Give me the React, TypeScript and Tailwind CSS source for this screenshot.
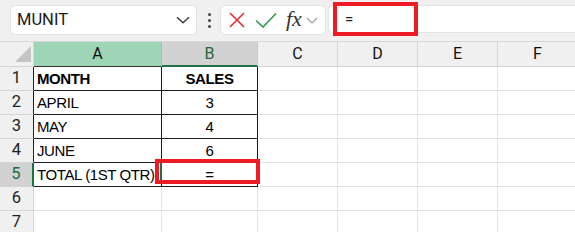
import React from "react";

const cols = ["A", "B", "C", "D", "E", "F"];

type Row = { n: number; a: string; b: string; bold?: boolean; table: boolean };

const rows: Row[] = [
  { n: 1, a: "MONTH", b: "SALES", bold: true, table: true },
  { n: 2, a: "APRIL", b: "3", table: true },
  { n: 3, a: "MAY", b: "4", table: true },
  { n: 4, a: "JUNE", b: "6", table: true },
  { n: 5, a: "TOTAL (1ST QTR)", b: "=", table: true },
  { n: 6, a: "", b: "", table: false },
  { n: 7, a: "", b: "", table: false },
];

function Toolbar() {
  return (
    <div className="relative flex h-[42px] items-start bg-[#f0f0f0] border-b border-[#d9d9d9] font-['Roboto',sans-serif]">
      {/* Name box */}
      <div className="ml-[10px] mt-[5px] flex h-[30px] w-[187px] items-center justify-between rounded-[5px] border border-[#e3e3e3] bg-white pl-[6px] pr-[6px]">
        <span className="text-[16.5px] leading-none text-[#1a1a1a]">MUNIT</span>
        <svg width="14" height="8" viewBox="0 0 14 8">
          <path d="M1 1.2 L7 6.8 L13 1.2" fill="none" stroke="#3a3a3a" strokeWidth="1.4" />
        </svg>
      </div>
      {/* Dots */}
      <div className="mt-[13px] ml-[10px] flex w-[4px] flex-col items-center gap-[3px]">
        <div className="h-[3px] w-[3px] rounded-full bg-[#444]" />
        <div className="h-[3px] w-[3px] rounded-full bg-[#444]" />
        <div className="h-[3px] w-[3px] rounded-full bg-[#444]" />
      </div>
      {/* Buttons */}
      <div className="ml-[9px] mt-[5px] flex h-[30px] w-[106px] items-center rounded-[5px] border border-[#e3e3e3] bg-white pl-[8px]">
        <svg width="16" height="16" viewBox="0 0 16 16">
          <path d="M1 1 L15 15 M15 1 L1 15" stroke="#e3262c" strokeWidth="1.5" fill="none" />
        </svg>
        <svg width="22" height="16" viewBox="0 0 22 16" className="ml-[10px]">
          <path d="M1 8.5 L8 15 L21 1.5" stroke="#2f9a45" strokeWidth="1.6" fill="none" />
        </svg>
        <span className="ml-[9px] -mt-[3px] font-['Liberation_Serif',serif] text-[22px] italic leading-none text-[#333]">
          fx
        </span>
        <svg width="12" height="7" viewBox="0 0 12 7" className="ml-[4px]">
          <path d="M1 1 L6 6 L11 1" fill="none" stroke="#9a9a9a" strokeWidth="1.2" />
        </svg>
      </div>
      {/* Formula input */}
      <div className="ml-[2px] mt-[5px] flex h-[28px] flex-1 items-center rounded-l-[5px] border border-r-0 border-[#e3e3e3] bg-white pl-[16px]">
        <span className="text-[15px] leading-none text-[#222]">=</span>
      </div>
      {/* Red annotation */}
      <div className="absolute left-[333px] top-[2px] h-[34px] w-[85px] border-[4px] border-[#ed1c24]" />
    </div>
  );
}

function HeaderRow() {
  return (
    <div className="flex h-[25px] font-['Roboto',sans-serif] text-[16px]">
      <div className="relative w-[34px] shrink-0 border-r border-b border-[#d4d4d4] bg-[#f0f0f0]">
        <svg width="16" height="16" viewBox="0 0 16 16" className="absolute left-[15px] top-[4px]">
          <path d="M16 0 L16 16 L0 16 Z" fill="#c4c4c4" />
        </svg>
      </div>
      <div className="flex w-[128px] shrink-0 items-center justify-center border-r border-b border-r-[#b5b5b5] border-b-[#333] bg-[#9fd5b7] text-[#111]">
        A
      </div>
      <div className="flex w-[96px] shrink-0 items-center justify-center border-r border-r-[#c8c8c8] border-b-2 border-b-[#1e7145] bg-[#d2d2d2] text-[#1e6b41]">
        B
      </div>
      {cols.slice(2).map((c) => (
        <div
          key={c}
          className="flex w-[80px] shrink-0 items-center justify-center border-r border-b border-[#d4d4d4] bg-[#f0f0f0] text-[#111]"
        >
          {c}
        </div>
      ))}
    </div>
  );
}

function DataRow({ r }: { r: Row }) {
  const active = r.n === 5;
  const rowHead = active
    ? "bg-[#d2d2d2] text-[#1e6b41] border-r-2 border-r-[#1e7145] border-b-[#d4d4d4]"
    : r.table
    ? "bg-[#f0f0f0] text-[#222] border-r-[#222] border-b-[#d4d4d4]"
    : "bg-[#f0f0f0] text-[#222] border-r-[#d4d4d4] border-b-[#d4d4d4]";
  const tb = r.table ? "border-[#1a1a1a]" : "border-[#e1e1e1]";
  return (
    <div className="flex h-[24px]">
      <div
        className={`flex w-[34px] shrink-0 items-center justify-center border-r border-b font-['Roboto',sans-serif] text-[16.5px] ${rowHead}`}
      >
        {r.n}
      </div>
      <div
        className={`flex w-[128px] shrink-0 items-center overflow-hidden whitespace-nowrap border-r border-b pl-[3px] pt-[2px] font-['Liberation_Sans',sans-serif] text-[15px] tracking-[-0.4px] text-black ${tb} ${
          r.bold ? "font-bold" : ""
        }`}
      >
        {r.a}
      </div>
      <div
        className={`relative flex w-[96px] shrink-0 items-center justify-center border-r border-b pt-[2px] font-['Liberation_Sans',sans-serif] text-[15px] tracking-[-0.4px] text-black ${tb} ${
          r.bold ? "font-bold" : ""
        }`}
      >
        {r.b}
        {active && (
          <>
            <div className="absolute left-[-2px] top-0 h-[21px] w-[2px] bg-[#1e7145]" />
            <div className="absolute left-[-7px] top-[-4px] h-[25px] w-[105px] border-[4px] border-[#ed1c24]" />
          </>
        )}
      </div>
      {cols.slice(2).map((c) => (
        <div key={c} className="w-[80px] shrink-0 border-r border-b border-[#e1e1e1]" />
      ))}
    </div>
  );
}

export default function App() {
  return (
    <div className="h-[232px] w-[575px] overflow-hidden bg-white">
      <Toolbar />
      <HeaderRow />
      {rows.map((r) => (
        <DataRow key={r.n} r={r} />
      ))}
    </div>
  );
}
